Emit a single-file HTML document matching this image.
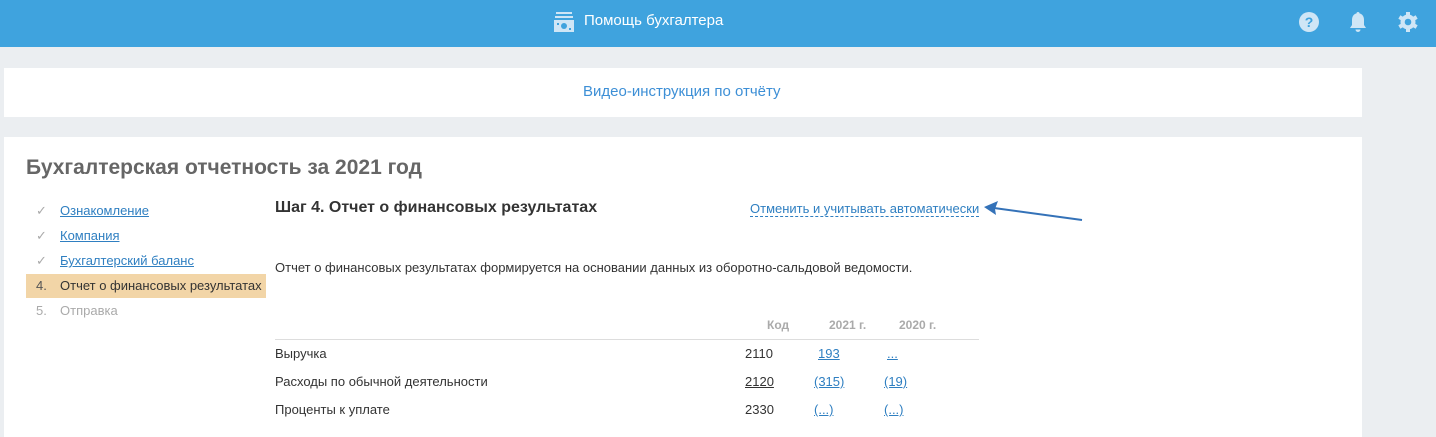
<!DOCTYPE html>
<html><head><meta charset="utf-8"><style>
*{margin:0;padding:0;box-sizing:border-box}
body{width:1436px;height:429px;overflow:hidden;background:#ebeef1;font-family:"Liberation Sans",Arial,sans-serif;font-size:13px;color:#333;position:relative}
.hdr{position:absolute;left:0;top:0;width:1436px;height:47px;background:#3fa3de}
.title{position:absolute;left:584px;top:12px;color:#fff;font-size:15px}
.c1{position:absolute;left:4px;top:68px;width:1358px;height:49px;background:#fff}
.c2{position:absolute;left:4px;top:137px;width:1358px;height:300px;background:#fff}
a{color:#2f7fc1}
.abs{position:absolute;white-space:nowrap}
.nav{position:absolute;left:26px;width:240px;height:24px;line-height:24px;font-size:13px}
.nav span.m{position:absolute;left:10px;color:#aaa}
.nav .t{position:absolute;left:34px}
.nav a{color:#2f7fc1;text-decoration:underline}
.lk{color:#2f7fc1;text-decoration:underline}
</style></head><body>
<div class="hdr">
<svg class="abs" style="left:554px;top:11px" width="20" height="22" viewBox="0 0 20 22"><rect x="2" y="1" width="16" height="2" fill="#cfe6f6"/><rect x="1" y="5" width="18" height="2" fill="#cfe6f6"/><rect x="0" y="9" width="20" height="12" fill="#cfe6f6"/><circle cx="10" cy="15" r="3" fill="#3fa3de"/><rect x="3" y="12" width="2" height="2" fill="#3fa3de"/><rect x="15" y="17" width="2" height="2" fill="#3fa3de"/></svg>
<div class="title">Помощь бухгалтера</div>
<svg class="abs" style="left:1298px;top:11px" width="22" height="22" viewBox="0 0 22 22"><circle cx="11" cy="11" r="10" fill="#cfe6f6"/><text x="11" y="16" text-anchor="middle" font-family="Liberation Sans" font-weight="bold" font-size="14" fill="#3fa3de">?</text></svg>
<svg class="abs" style="left:1348px;top:11px" width="20" height="22" viewBox="0 0 20 22"><path d="M10 1c1 0 1.5.6 1.5 1.4C14.5 3.2 16 5.6 16 9v5l2 3H2l2-3V9c0-3.4 1.5-5.8 4.5-6.6C8.5 1.6 9 1 10 1z" fill="#cfe6f6"/><path d="M7.5 18.5h5a2.5 2.5 0 0 1-5 0z" fill="#cfe6f6"/></svg>
<svg class="abs" style="left:1397px;top:11px" width="22" height="22" viewBox="0 0 22 22"><g fill="#cfe6f6"><circle cx="11" cy="11" r="7.5"/><rect x="9" y="1" width="4" height="20"/><rect x="9" y="1" width="4" height="20" transform="rotate(60 11 11)"/><rect x="9" y="1" width="4" height="20" transform="rotate(120 11 11)"/></g><circle cx="11" cy="11" r="3.3" fill="#3fa3de"/></svg>
</div>
<div class="c1"><div class="abs" style="left:579px;top:15px;color:#3d8fd6;font-size:15px">Видео-инструкция по отчёту</div></div>
<div class="c2">
<div class="abs" style="left:22px;top:19px;font-size:21px;font-weight:bold;color:#666">Бухгалтерская отчетность за 2021 год</div>
</div>
<div class="nav" style="top:199px"><span class="m">✓</span><a class="t">Ознакомление</a></div>
<div class="nav" style="top:224px"><span class="m">✓</span><a class="t">Компания</a></div>
<div class="nav" style="top:249px"><span class="m">✓</span><a class="t">Бухгалтерский баланс</a></div>
<div class="nav" style="top:274px;background:#f2d5a7"><span class="m" style="color:#555">4.</span><span class="t">Отчет о финансовых результатах</span></div>
<div class="nav" style="top:299px;color:#aaa"><span class="m">5.</span><span class="t">Отправка</span></div>
<div class="abs" style="left:275px;top:199px;font-size:16px;font-weight:bold;color:#333">Шаг 4. Отчет о финансовых результатах</div>
<div class="abs" style="left:750px;top:201px;color:#2f7fc1;border-bottom:1px dashed #2f7fc1;line-height:15px">Отменить и учитывать автоматически</div>
<svg class="abs" style="left:982px;top:198px" width="104" height="26" viewBox="0 0 104 26"><path d="M100 22 L12 10" stroke="#3472b8" stroke-width="2" fill="none"/><path d="M2 9 L16 3 L13 11 L14 17 Z" fill="#3472b8"/></svg>
<div class="abs" style="left:275px;top:260px;font-size:13px">Отчет о финансовых результатах формируется на основании данных из оборотно-сальдовой ведомости.</div>
<div class="abs" style="left:767px;top:318px;font-weight:bold;color:#aaa;font-size:12px">Код</div>
<div class="abs" style="left:829px;top:318px;font-weight:bold;color:#aaa;font-size:12px">2021 г.</div>
<div class="abs" style="left:899px;top:318px;font-weight:bold;color:#aaa;font-size:12px">2020 г.</div>
<div class="abs" style="left:275px;top:339px;width:704px;height:1px;background:#ddd"></div>
<div class="abs" style="left:275px;top:346px">Выручка</div>
<div class="abs" style="left:745px;top:346px">2110</div>
<div class="abs lk" style="left:818px;top:346px">193</div>
<div class="abs lk" style="left:887px;top:346px">...</div>
<div class="abs" style="left:275px;top:374px">Расходы по обычной деятельности</div>
<div class="abs" style="left:745px;top:374px;text-decoration:underline">2120</div>
<div class="abs lk" style="left:814px;top:374px">(315)</div>
<div class="abs lk" style="left:884px;top:374px">(19)</div>
<div class="abs" style="left:275px;top:402px">Проценты к уплате</div>
<div class="abs" style="left:745px;top:402px">2330</div>
<div class="abs lk" style="left:814px;top:402px">(...)</div>
<div class="abs lk" style="left:884px;top:402px">(...)</div>
</body></html>
